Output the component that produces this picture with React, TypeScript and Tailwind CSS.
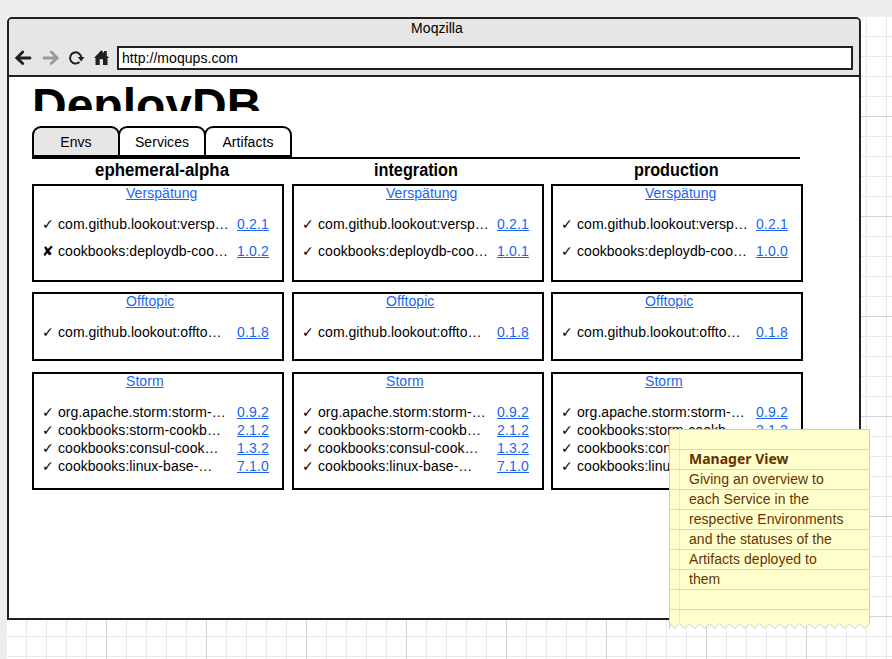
import React from "react";

type Row = { name: string; version: string; failed?: boolean };

const offtopic: Row[] = [{ name: "com.github.lookout:offto…", version: "0.1.8" }];

const storm: Row[] = [
  { name: "org.apache.storm:storm-…", version: "0.9.2" },
  { name: "cookbooks:storm-cookb…", version: "2.1.2" },
  { name: "cookbooks:consul-cook…", version: "1.3.2" },
  { name: "cookbooks:linux-base-…", version: "7.1.0" },
];

const environments = [
  { name: "ephemeral-alpha", cookbook: "1.0.2", failed: true, offset: "", heading: "ml-[63px] scale-x-[0.937]" },
  { name: "integration", cookbook: "1.0.1", failed: false, offset: "ml-2", heading: "ml-[82px] scale-x-[0.903]" },
  { name: "production", cookbook: "1.0.0", failed: false, offset: "ml-[7px]", heading: "ml-[83px] scale-x-[0.9]" },
];

function Service({ title, rows, box, row }: { title: string; rows: Row[]; box: string; row: string }) {
  return (
    <section className={`w-[252px] border-2 border-black ${box}`}>
      <div className="-mt-[2px] h-[18px] pl-[92px] leading-[18px]">
        <a className="text-[#1a66f0] underline">{title}</a>
      </div>
      <ul className="mt-[13px]">
        {rows.map((r) => (
          <li key={r.name} className={`flex h-[18px] leading-[18px] ${row}`}>
            <span className="ml-[8px] w-[16px] font-['DejaVu_Sans',sans-serif]">{r.failed ? "✘" : "✓"}</span>
            <span className="w-[179px] whitespace-nowrap">{r.name}</span>
            <a className="tracking-[0.18px] text-[#1a66f0] underline">{r.version}</a>
          </li>
        ))}
      </ul>
    </section>
  );
}

function BrowserIcons() {
  return (
    <svg className="ml-[6px] h-[20px] w-[102px]" viewBox="15 48 102 20" fill="none">
      <g strokeWidth="2.8" strokeLinecap="round" strokeLinejoin="miter">
        <path d="M22.7 52 L16.8 58 L22.7 63.6 M17.5 58H30" stroke="#231f20" />
        <path d="M51.3 52 L57.2 58 L51.3 63.6 M56.5 58H44" stroke="#999" />
      </g>
      <path d="M79.5 62.1 A5.6 5.6 0 1 1 81.2 57" stroke="#231f20" strokeWidth="2" />
      <path d="M77.8 57H84.5L81.2 61.5Z" fill="#231f20" />
      <path d="M94 58 101.3 50.2 104 53V51H106.8V55.8L109.4 58H107.5V65H103V59.3H99.7V65H95.5V58Z" fill="#231f20" />
    </svg>
  );
}

function Tab({ label, className }: { label: string; className: string }) {
  return (
    <button className={`h-[31px] w-[88px] rounded-t-[9px] border-2 border-black pt-[1px] text-center ${className}`}>
      {label}
    </button>
  );
}

function Note() {
  const zigzag = Array.from({ length: 20 }, (_, i) => `L${5.5 + i * 10} 199.5 L${10.5 + i * 10} 194.5`).join(" ");
  return (
    <aside className="absolute left-[669px] top-[429px] h-[201px] w-[201px] text-[#663300]">
      <svg className="absolute inset-0 h-full w-full" viewBox="0 0 201 201">
        <path d={`M0.5 0.5 V194.5 ${zigzag} V0.5Z`} fill="#ffffcc" stroke="#ccc" />
        {Array.from({ length: 9 }, (_, i) => (
          <path key={i} d={`M1 ${20.5 + i * 20}H200`} stroke="#dddbaa" />
        ))}
        <path d="M10.5 1V194" stroke="#ffe2b8" />
        <path d="M0.5 194V200" stroke="#ccc" />
      </svg>
      <div className="relative pl-5 pt-5 leading-[20px]">
        <b className="block font-['Noto_Sans',sans-serif] tracking-normal">Manager View</b>
        <p className="whitespace-nowrap">
          Giving an overview to<br />each Service in the<br />respective Environments<br />
          and the statuses of the<br />Artifacts deployed to<br />them
        </p>
      </div>
    </aside>
  );
}

export default function App() {
  return (
    <div className="relative h-[659px] w-[892px] overflow-hidden bg-[#eeeeee] pl-[7px] pt-[17px] font-['Liberation_Sans',Arial,sans-serif] text-[14px] tracking-[0.05px] text-black">
      <div className="h-[642px] w-[885px] bg-white bg-[linear-gradient(to_right,#d3d3d3_1px,transparent_1px),linear-gradient(to_bottom,#d3d3d3_1px,transparent_1px),linear-gradient(to_right,#e9e9e9_1px,transparent_1px),linear-gradient(to_bottom,#e9e9e9_1px,transparent_1px)] bg-[size:100px_100px,100px_100px,20px_20px,20px_20px] bg-[position:99px_0,0_99px,19px_0,0_19px]">
        <main className="h-[603px] w-[854px] overflow-hidden rounded-t-[5px] border-2 border-[#231f20] bg-white">
          <header className="h-[58px] border-b-2 border-[#231f20] bg-[#e6e6e6]">
            <div className="h-[27px] pl-[6px] text-center leading-[18px]">Moqzilla</div>
            <div className="flex items-center">
              <BrowserIcons />
              <div className="h-[24px] w-[736px] border-2 border-[#231f20] bg-white pl-[3px] leading-[21px]">http://moqups.com</div>
            </div>
          </header>
          <div className="pl-[23px]">
            <h1 className="mt-[5px] h-[29px] overflow-hidden text-[48px] font-bold leading-[48px] tracking-normal">DeployDB</h1>
            <nav className="mt-[15px] flex h-[31px]">
              <Tab label="Envs" className="bg-[#e6e6e6]" />
              <Tab label="Services" className="-ml-[2px] bg-white" />
              <Tab label="Artifacts" className="-ml-[2px] bg-white" />
            </nav>
            <div className="h-[2px] w-[768px] bg-black" />
            <div className="flex">
              {environments.map((env) => (
                <div key={env.name} className={`w-[252px] ${env.offset}`}>
                  <h2 className={`h-[25px] w-max origin-left text-[18px] font-bold leading-[22px] tracking-normal ${env.heading}`}>{env.name}</h2>
                  <Service
                    title="Verspätung"
                    rows={[
                      { name: "com.github.lookout:versp…", version: "0.2.1" },
                      { name: "cookbooks:deploydb-coo…", version: env.cookbook, failed: env.failed },
                    ]}
                    box="h-[98px]"
                    row="mb-[9px]"
                  />
                  <Service title="Offtopic" rows={offtopic} box="mt-[10px] h-[69px]" row="" />
                  <Service title="Storm" rows={storm} box="mt-[11px] h-[118px]" row="" />
                </div>
              ))}
            </div>
          </div>
        </main>
      </div>
      <Note />
    </div>
  );
}
